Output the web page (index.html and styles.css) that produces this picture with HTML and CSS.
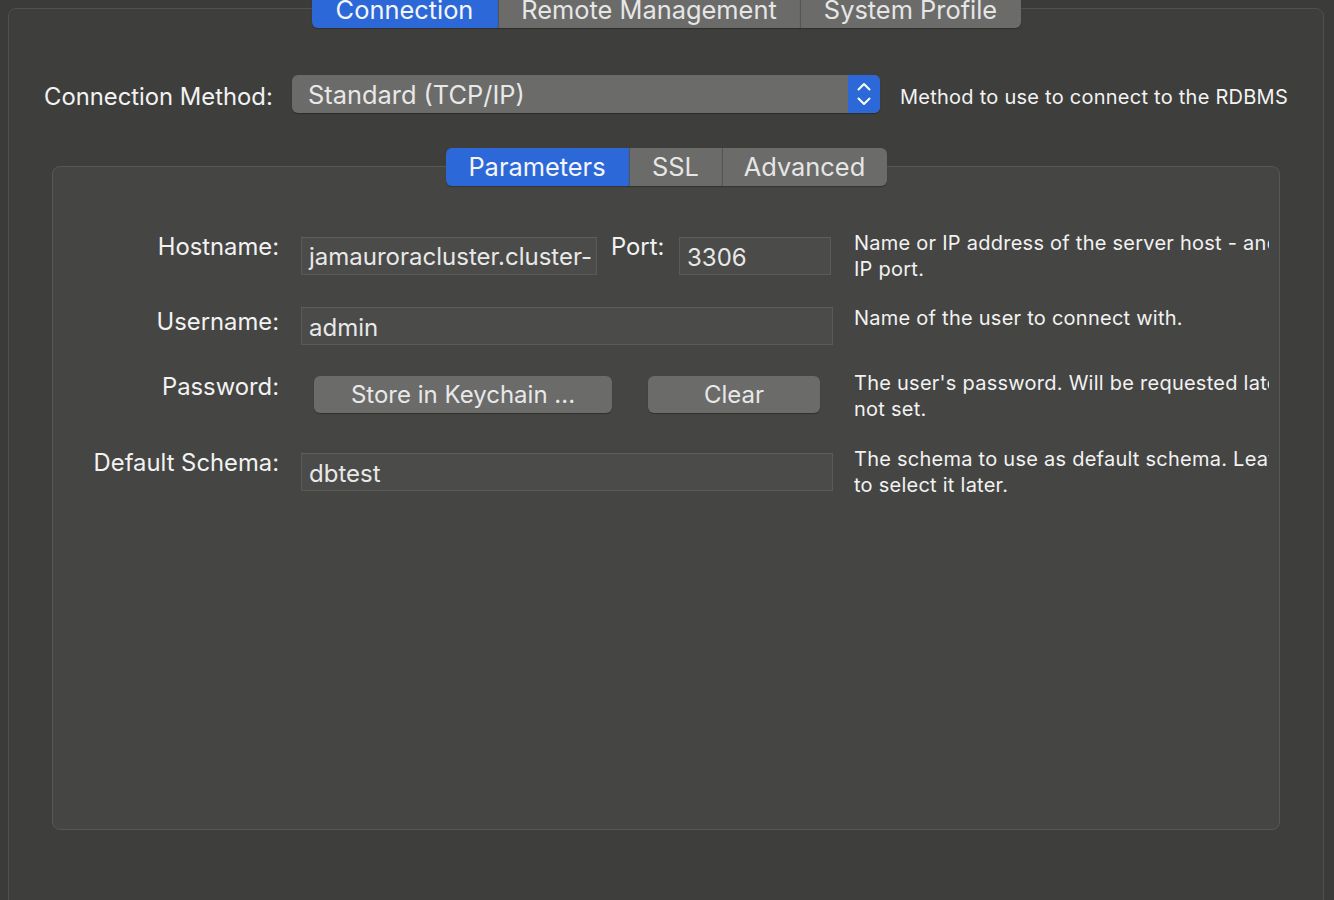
FILE: index.html
```html
<!DOCTYPE html>
<html>
<head>
<meta charset="utf-8">
<link rel="stylesheet" href="styles.css">
</head>
<body>
<div class="panel">
  <div class="tabbar">
    <div class="tab active">Connection</div>
    <div class="tab">Remote Management</div>
    <div class="tab">System Profile</div>
  </div>
  <div class="method-row">
    <div class="label method-label">Connection Method:</div>
    <div class="combo">
      <div class="combo-text">Standard (TCP/IP)</div>
      <div class="combo-stepper">
        <svg width="16" height="26" viewBox="0 0 16 26"><polyline points="2.5,8.5 8,3 13.5,8.5" fill="none" stroke="#fff" stroke-width="2" stroke-linecap="round" stroke-linejoin="round"/><polyline points="2.5,17.5 8,23 13.5,17.5" fill="none" stroke="#fff" stroke-width="2" stroke-linecap="round" stroke-linejoin="round"/></svg>
      </div>
    </div>
    <div class="desc method-desc">Method to use to connect to the RDBMS</div>
  </div>
  <div class="inner">
    <div class="tabbar inner-tabs">
      <div class="tab active">Parameters</div>
      <div class="tab">SSL</div>
      <div class="tab">Advanced</div>
    </div>
    <div class="form">
      <div class="row row-host">
        <div class="label">Hostname:</div>
        <div class="field host-field">
          <div class="input host-input">jamauroracluster.cluster-ckr8hqxyz.us-east-1.rds.amazonaws.com</div>
          <div class="label port-label">Port:</div>
          <div class="input port-input">3306</div>
        </div>
        <div class="desc"><span>Name or IP address of the server host - and TCP/</span><span>IP port.</span></div>
      </div>
      <div class="row row-user">
        <div class="label">Username:</div>
        <div class="field"><div class="input wide">admin</div></div>
        <div class="desc"><span>Name of the user to connect with.</span></div>
      </div>
      <div class="row row-pass">
        <div class="label">Password:</div>
        <div class="field buttons">
          <div class="button store">Store in Keychain ...</div>
          <div class="button clear">Clear</div>
        </div>
        <div class="desc"><span>The user's password. Will be requested later if it's</span><span>not set.</span></div>
      </div>
      <div class="row row-schema">
        <div class="label">Default Schema:</div>
        <div class="field"><div class="input wide">dbtest</div></div>
        <div class="desc"><span>The schema to use as default schema. Leave blank</span><span>to select it later.</span></div>
      </div>
    </div>
  </div>
</div>
</body>
</html>
```

FILE: styles.css
```css
* { box-sizing: border-box; }
html, body { margin: 0; padding: 0; }
body {
  width: 1334px;
  height: 900px;
  overflow: hidden;
  background: #3b3b39;
  font-family: Inter, "Noto Sans", "Liberation Sans", sans-serif;
  color: #f2f2f2;
  padding: 8px 10px 0 8px;
}
.panel {
  height: 920px;
  border: 1px solid #50504e;
  border-radius: 8px;
  background: #3e3e3c;
  padding: 0 0 0 35px;
}
.tabbar {
  display: flex;
  justify-content: center;
  margin-top: -19px;
  margin-left: -35px;
}
.tab {
  height: 38px;
  line-height: 40px;
  background: #6b6b6a;
  color: #e6e6e6;
  font-size: 25.4px;
  text-align: center;
  border-left: 1px solid #555554;
  box-shadow: 0 1px 1px rgba(0,0,0,0.25);
  white-space: nowrap;
}
.tab:first-child { border-left: none; border-radius: 6px 0 0 6px; }
.tab:last-child { border-radius: 0 6px 6px 0; }
.tab.active { background: #2d68d8; color: #f4f6fb; }
.tabbar .tab:nth-child(1) { width: 186px; }
.tabbar .tab:nth-child(2) { width: 302px; }
.tabbar .tab:nth-child(3) { width: 221px; }
.inner-tabs .tab { line-height: 38px; }
.inner-tabs .tab:nth-child(1) { width: 183px; }
.inner-tabs .tab:nth-child(2) { width: 93px; }
.inner-tabs .tab:nth-child(3) { width: 165px; }
.method-row {
  display: flex;
  align-items: center;
  margin-top: 47px;
  height: 38px;
}
.label { font-size: 23.8px; white-space: nowrap; line-height: 20px; }
.method-label { width: 248px; padding-top: 5px; }
.combo {
  width: 588px;
  height: 38px;
  display: flex;
  border-radius: 6px;
  background: #6b6b6a;
  overflow: hidden;
  box-shadow: 0 1px 1px rgba(0,0,0,0.3);
}
.combo-text {
  flex: 1;
  font-size: 25.4px;
  line-height: 40px;
  padding-left: 16px;
  color: #e8e8e8;
}
.combo-stepper {
  width: 32px;
  background: #2d68d8;
  display: flex;
  align-items: center;
  justify-content: center;
}
.desc {
  font-size: 20px;
  letter-spacing: 0.25px;
  line-height: 26px;
  white-space: nowrap;
  overflow: hidden;
  display: flex;
  flex-direction: column;
}
.method-desc { margin-left: 20px; padding-top: 5px; }
.inner {
  margin: 53px 0 0 8px;
  width: 1228px;
  height: 664px;
  border: 1px solid #575755;
  border-radius: 8px;
  background: #454543;
}
.inner-tabs { margin-left: 0; margin-top: -19px; }
.form { padding-top: 50px; }
.row {
  display: grid;
  grid-template-columns: 226px 532px 414px;
  column-gap: 22px;
}
.row > .label { text-align: right; padding-top: 1px; }
.row > .desc { margin-left: -1px; margin-top: -6px; }
.row-host { height: 75px; }
.row-user { height: 65px; }
.row-pass { height: 76px; }
.field { display: flex; align-items: flex-start; }
.input {
  flex: none;
  height: 38px;
  margin-top: 1px;
  background: #4b4b49;
  border: 1px solid #5a5a58;
  border-top-color: #5e5e5c;
  font-size: 24px;
  line-height: 39px;
  padding-left: 7px;
  color: #e8e8e8;
  white-space: nowrap;
  overflow: hidden;
}
.row-user .input { margin-top: -4px; }
.host-input { width: 296px; white-space: normal; line-height: 38px; }
.port-label { margin-left: 14px; width: 68px; padding-top: 1px; }
.port-input { width: 152px; }
.wide { width: 532px; }
.buttons { padding-left: 13px; }
.button {
  flex: none;
  height: 37px;
  line-height: 38px;
  background: #6b6b6a;
  border-radius: 6px;
  text-align: center;
  font-size: 24px;
  color: #e8e8e8;
  box-shadow: 0 1px 1px rgba(0,0,0,0.3);
}
.store { width: 298px; }
.clear { width: 172px; margin-left: 36px; }
```
